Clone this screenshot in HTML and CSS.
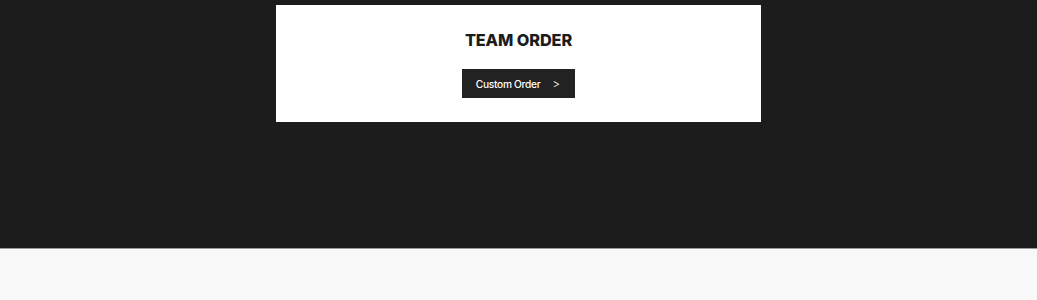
FILE: index.html
```html
<!DOCTYPE html>
<html>
<head>
<meta charset="utf-8">
<link rel="stylesheet" href="styles.css">
</head>
<body>
<div class="dark">
  <section class="card">
    <h2 class="title">TEAM ORDER</h2>
    <a class="btn" href="#"><span class="label">Custom Order</span><span class="arrow">&gt;</span></a>
  </section>
</div>
<div class="light"></div>
</body>
</html>
```
FILE: styles.css
```css
html, body { margin: 0; padding: 0; }
body { font-family: Inter, "Noto Sans", sans-serif; background: #f9f9f9; }
.dark {
  background: #1c1c1c;
  height: 249px;
  padding-top: 5px;
  box-sizing: border-box;
  border-bottom: 1px solid #9a9a9a;
}
.card {
  width: 485px;
  height: 117px;
  margin: 0 auto;
  background: #fff;
  box-sizing: border-box;
  display: flex;
  flex-direction: column;
  align-items: center;
  padding-top: 24px;
}
.title {
  margin: 0;
  font-size: 16.3px;
  font-weight: 800;
  line-height: 22px;
  color: #1c1c1c;
  letter-spacing: -0.1px;
}
.btn {
  margin-top: 18px;
  height: 29px;
  box-sizing: border-box;
  background: #222;
  color: #fff;
  text-decoration: none;
  display: flex;
  align-items: center;
  gap: 12px;
  padding: 0 15px 0 14px;
  font-size: 10.2px;
  font-weight: 500;
}
.label { letter-spacing: -0.3px; }
.arrow { font-size: 12px; font-weight: 300; }
.light { height: 50px; background: #f9f9f9; }
```
